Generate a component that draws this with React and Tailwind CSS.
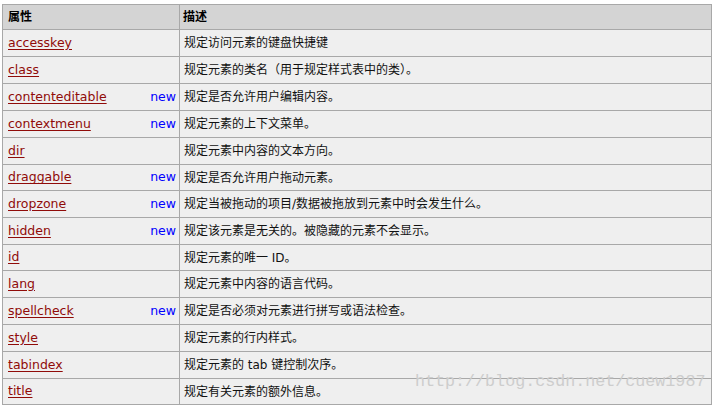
import React from "react";

const rows = [
  ["accesskey", false, "规定访问元素的键盘快捷键", 27],
  ["class", false, "规定元素的类名（用于规定样式表中的类）。", 27],
  ["contenteditable", true, "规定是否允许用户编辑内容。", 27],
  ["contextmenu", true, "规定元素的上下文菜单。", 27],
  ["dir", false, "规定元素中内容的文本方向。", 27],
  ["draggable", true, "规定是否允许用户拖动元素。", 26],
  ["dropzone", true, "规定当被拖动的项目/数据被拖放到元素中时会发生什么。", 27],
  ["hidden", true, "规定该元素是无关的。被隐藏的元素不会显示。", 27],
  ["id", false, "规定元素的唯一 ID。", 26],
  ["lang", false, "规定元素中内容的语言代码。", 27],
  ["spellcheck", true, "规定是否必须对元素进行拼写或语法检查。", 27],
  ["style", false, "规定元素的行内样式。", 27],
  ["tabindex", false, "规定元素的 tab 键控制次序。", 27],
  ["title", false, "规定有关元素的额外信息。", 26],
];

const font = { fontFamily: '"DejaVu Sans", "Noto Sans CJK SC", sans-serif' };

export default function App() {
  return (
    <div className="relative w-[718px] h-[406px] bg-white overflow-hidden" style={font}>
      <div className="ml-[2px] mt-[4px] w-[710px] border-l border-t border-[#a8a8a8] grid grid-cols-[177px_532px]">
        <div className="h-[25px] bg-[#d4d4d4] border-r border-b border-[#a8a8a8] flex items-center pl-[5px] text-[12px] font-bold text-black">属性</div>
        <div className="h-[25px] bg-[#d4d4d4] border-r border-b border-[#a8a8a8] flex items-center pl-[3px] text-[12px] font-bold text-black">描述</div>
        {rows.map(([name, isNew, desc, h]) => (
          <React.Fragment key={name}>
            <div
              className={`bg-[#efefef] border-r border-b border-[#a8a8a8] flex items-center justify-between pl-[5px] pr-[3px] ${h === 26 ? "h-[26px]" : "h-[27px]"}`}
            >
              <a className="text-[12.5px] text-[#900b09] underline underline-offset-[2px]">{name}</a>
              {isNew && <span className="text-[12.5px] text-[#0000ff]">new</span>}
            </div>
            <div
              className={`bg-[#efefef] border-r border-b border-[#a8a8a8] flex items-center pl-[4px] text-[12px] text-[#111]  ${h === 26 ? "h-[26px]" : "h-[27px]"}`}
            >
              {desc}
            </div>
          </React.Fragment>
        ))}
      </div>
      <div
        className="absolute left-[415px] top-[374px] text-[16.7px] text-[#cdcdcd] leading-none whitespace-nowrap"
        style={{ fontFamily: '"Liberation Mono", monospace' }}
      >
        http://blog.csdn.net/cuew1987
      </div>
    </div>
  );
}
